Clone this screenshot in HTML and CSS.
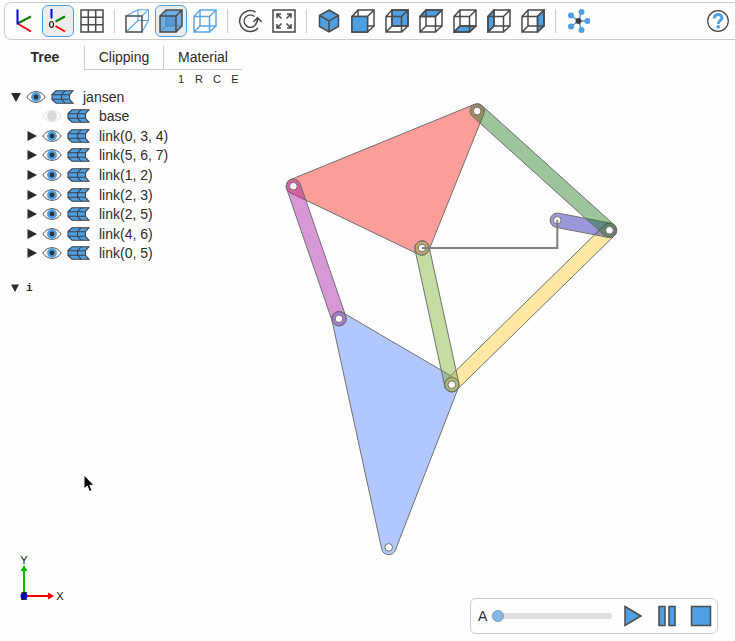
FILE: index.html
```html
<!DOCTYPE html>
<html lang="en">
<head>
<meta charset="utf-8">
<title>jansen</title>
<link rel="stylesheet" href="styles.css">
</head>
<body>
<svg class="defs" aria-hidden="true">
  <symbol id="box" viewBox="0 0 24 24"><path d="M1 7.500H16.500V23H1zM7 1H23V17H7zM1 7.500L7 1M16.500 7.500L23 1M16.500 23L23 17M1 23L7 17"/></symbol>
  <symbol id="eye" viewBox="0 0 20 14"><path d="M.8 7C5.500-.2 14.500-.2 19.200 7C14.500 14.200 5.500 14.200.8 7z" fill="#fff" stroke="#555" stroke-width="1"/><circle cx="10" cy="7" r="4.900" fill="#4f9fe3"/><circle cx="10" cy="7" r="2.400" fill="#333"/></symbol>
  <symbol id="eye-off" viewBox="0 0 20 14"><path d="M.8 7C5.500-.2 14.500-.2 19.200 7C14.500 14.200 5.500 14.200.8 7z" fill="#fff" stroke="#ddd" stroke-width="1"/><circle cx="10" cy="7" r="4.900" fill="#d9d9d9"/></symbol>
  <symbol id="shape" viewBox="0 0 23 14"><path d="M5 .8H22L18.500 4.700V9.300L22 13.200H5L1 9.500V4.500z" fill="#4f9fe3" stroke="#3b4046" stroke-width="1.100"/><path d="M1 4.700H18.500M1 9.300H18.500M14 .8L10.500 4.700V9.300L14 13.200" fill="none" stroke="#3b4046" stroke-width="1.100"/></symbol>
  <symbol id="closed" viewBox="0 0 10 12"><path d="M.5 1L10 6L.5 11z" fill="#2b2b2b"/></symbol>
  <symbol id="open" viewBox="0 0 10 12"><path d="M0 2H10L5 11z" fill="#2b2b2b"/></symbol>
</svg>

<header class="toolbar">
  <button class="tool" aria-label="Axes"><svg viewBox="0 0 24 24"><g fill="none" stroke-width="2"><path stroke="#007f00" d="M5.500 14.500L19 7.500"/><path stroke="red" d="M5.500 14.500L19 22.500"/><path stroke="#0000e8" d="M5.500.5V15.500"/></g></svg></button>
  <button class="tool on" aria-label="Axes at origin"><svg viewBox="0 0 24 24"><g fill="none" stroke-width="2"><path stroke="#007f00" d="M9.500 12.500L19 7.500"/><path stroke="red" d="M9.500 17L19 22.500"/><path stroke="#0000e8" d="M5.500 0V9.500"/></g><ellipse cx="5.500" cy="15.500" rx="2" ry="3" fill="none" stroke="#222" stroke-width="1.200"/></svg></button>
  <button class="tool" aria-label="Grid"><svg class="line" viewBox="0 0 24 24"><path d="M1 1H23V23H1zM8.300 1V23M15.700 1V23M1 8.300H23M1 15.700H23"/></svg></button>
  <span class="sep"></span>
  <button class="tool" aria-label="Perspective"><svg class="line" viewBox="0 0 24 24"><path class="thin" d="M13 .7H23.500V11.500H13zM1 7L13 .7M17 7L23.500.7M17 23L23.500 11.500M1 23L13 11.500"/><path d="M1 7H17V23H1z"/></svg></button>
  <button class="tool on" aria-label="Transparent"><svg class="line" viewBox="0 0 24 24"><path fill="#72ade0" stroke="none" d="M1 7L7 1H23V17L17 23H1z"/><path fill="#5799d3" stroke="none" d="M7 7H17V17H7z"/><path stroke="#4a86ba" stroke-width="1" d="M7 1V17H23M1 23L7 17"/><path d="M1 7H17V23H1zM1 7L7 1H23V17L17 23M17 7L23 1"/></svg></button>
  <button class="tool" aria-label="Black edges"><svg class="line sky" viewBox="0 0 24 24"><use href="#box"/></svg></button>
  <span class="sep"></span>
  <button class="tool" aria-label="Reset view"><svg class="line" viewBox="0 0 24 24"><path d="M17.500 3A10.500 10.500 0 1 0 20 19M16.500 7.500A6.200 6.200 0 1 0 15.500 17.500C18.500 15.500 19.500 12.500 19.500 9.500M15.500 13L19.500 8.500L23.700 13"/></svg></button>
  <button class="tool" aria-label="Fit"><svg class="line" viewBox="0 0 24 24"><path d="M1 1H23V23H1z"/><path d="M5 9V5H9M5 5L9.500 9.500M15 5H19V9M19 5L14.500 9.500M5 15V19H9M5 19L9.500 14.500M19 15V19H15M19 19L14.500 14.500"/></svg></button>
  <span class="sep"></span>
  <button class="tool" aria-label="Isometric"><svg class="line" viewBox="0 0 24 24"><path fill="#4f9fe3" d="M12 1L21.500 6.500V17.500L12 23L2.500 17.500V6.500z"/><path d="M2.500 6.500L12 12L21.500 6.500M12 12V23"/></svg></button>
  <button class="tool" aria-label="Front"><svg class="line" viewBox="0 0 24 24"><use href="#box"/><path fill="#4f9fe3" d="M1 7.500H16.500V23H1z"/></svg></button>
  <button class="tool" aria-label="Back"><svg class="line" viewBox="0 0 24 24"><path fill="#4f9fe3" d="M7 1H23V17H7z"/><use href="#box"/></svg></button>
  <button class="tool" aria-label="Top"><svg class="line" viewBox="0 0 24 24"><path fill="#4f9fe3" d="M1 7.500L7 1H23L16.500 7.500z"/><use href="#box"/></svg></button>
  <button class="tool" aria-label="Bottom"><svg class="line" viewBox="0 0 24 24"><path fill="#4f9fe3" d="M1 23L7 17H23L16.500 23z"/><use href="#box"/></svg></button>
  <button class="tool" aria-label="Left"><svg class="line" viewBox="0 0 24 24"><path fill="#4f9fe3" d="M1 7.500L7 1V17L1 23z"/><use href="#box"/></svg></button>
  <button class="tool" aria-label="Right"><svg class="line" viewBox="0 0 24 24"><path fill="#4f9fe3" d="M16.500 7.500L23 1V17L16.500 23z"/><use href="#box"/></svg></button>
  <span class="sep"></span>
  <button class="tool" aria-label="Explode"><svg viewBox="0 0 24 24"><path d="M12.500 12L5 6.500M12.500 12L15.500 3M12.500 12H22M12.500 12L15.500 21M12.500 12L5 17.500" stroke="#4f8fca" stroke-width="1.300"/><g fill="#4f9fe3"><circle cx="5" cy="6.500" r="3"/><circle cx="15.500" cy="3" r="3"/><circle cx="21.500" cy="12" r="3"/><circle cx="15.500" cy="21" r="3"/><circle cx="5" cy="17.500" r="3"/></g><circle cx="12.500" cy="12" r="3" fill="#3b4046"/></svg></button>
  <button class="tool help" aria-label="Help"><svg viewBox="0 0 24 24"><circle cx="12" cy="12" r="10.300" fill="#fff" stroke="#444" stroke-width="1.200"/><path d="M8.200 9.500C8.200 4 16 4.300 16 9C16 11.500 12.200 11.500 12.200 15" fill="none" stroke="#4f9fe3" stroke-width="3"/><circle cx="12.200" cy="17.900" r="1.800" fill="#4f9fe3"/></svg></button>
</header>

<main class="main">
  <section class="side">
    <nav class="tabs">
      <button class="tab active">Tree</button>
      <button class="tab">Clipping</button>
      <button class="tab">Material</button>
    </nav>
    <div class="collapse"><button>1</button><button>R</button><button>C</button><button>E</button></div>
    <ul class="tree">
      <li><svg class="caret"><use href="#open"/></svg><svg class="eye"><use href="#eye"/></svg><svg class="shape"><use href="#shape"/></svg><span>jansen</span></li>
      <li class="child"><span class="caret"></span><svg class="eye"><use href="#eye-off"/></svg><svg class="shape"><use href="#shape"/></svg><span>base</span></li>
      <li class="child"><svg class="caret"><use href="#closed"/></svg><svg class="eye"><use href="#eye"/></svg><svg class="shape"><use href="#shape"/></svg><span>link(0, 3, 4)</span></li>
      <li class="child"><svg class="caret"><use href="#closed"/></svg><svg class="eye"><use href="#eye"/></svg><svg class="shape"><use href="#shape"/></svg><span>link(5, 6, 7)</span></li>
      <li class="child"><svg class="caret"><use href="#closed"/></svg><svg class="eye"><use href="#eye"/></svg><svg class="shape"><use href="#shape"/></svg><span>link(1, 2)</span></li>
      <li class="child"><svg class="caret"><use href="#closed"/></svg><svg class="eye"><use href="#eye"/></svg><svg class="shape"><use href="#shape"/></svg><span>link(2, 3)</span></li>
      <li class="child"><svg class="caret"><use href="#closed"/></svg><svg class="eye"><use href="#eye"/></svg><svg class="shape"><use href="#shape"/></svg><span>link(2, 5)</span></li>
      <li class="child"><svg class="caret"><use href="#closed"/></svg><svg class="eye"><use href="#eye"/></svg><svg class="shape"><use href="#shape"/></svg><span>link(4, 6)</span></li>
      <li class="child"><svg class="caret"><use href="#closed"/></svg><svg class="eye"><use href="#eye"/></svg><svg class="shape"><use href="#shape"/></svg><span>link(0, 5)</span></li>
    </ul>
    <button class="info"><svg viewBox="0 0 8 8"><path d="M0 .5H8L4 8z" fill="#2b2b2b"/></svg>i</button>
  </section>

  <svg class="canvas" id="canvas" viewBox="242 40 493 601" role="img" aria-label="Jansen linkage"></svg>

  <svg class="gizmo" viewBox="0 0 70 60">
    <path d="M24 44V18" stroke="#00c000" stroke-width="2"/><path d="M20.500 19L24 13L27.500 19z" fill="#00c000"/>
    <path d="M24 44H49" stroke="red" stroke-width="2"/><path d="M48 40.500L54 44L48 47.500z" fill="red"/>
    <circle cx="24" cy="44" r="3.500" fill="#00f"/>
    <text x="24" y="12">Y</text><text x="60" y="48">X</text><text x="24" y="48">Z</text>
  </svg>

  <svg class="pointer" viewBox="0 0 12 19"><path d="M1 1V15L4.200 12L6.500 17.500L9 16.500L6.800 11.300H11z" fill="#000" stroke="#fff"/></svg>

  <div class="player">
    <label for="time">A</label>
    <input id="time" type="range" min="0" max="100" value="0">
    <button class="tool" aria-label="Play"><svg class="line" viewBox="0 0 24 24"><path fill="#4f9fe3" d="M4 2.500L20 12L4 21.500z"/></svg></button>
    <button class="tool" aria-label="Pause"><svg class="line" viewBox="0 0 24 24"><path fill="#4f9fe3" d="M4 2.500H10V21.500H4zM14 2.500H20V21.500H14z"/></svg></button>
    <button class="tool" aria-label="Stop"><svg class="line" viewBox="0 0 24 24"><path fill="#4f9fe3" d="M2.500 2.500H21.500V21.500H2.500z"/></svg></button>
  </div>
</main>
<script src="linkage.js"></script>
</body>
</html>
```
FILE: styles.css
```css
* { box-sizing: border-box; }
body {
  margin: 0;
  min-height: 100vh;
  display: flex;
  flex-direction: column;
  overflow: hidden;
  background: #fefefe;
  color: #2b2b2b;
  font: 14px "Liberation Sans", Arial, sans-serif;
}
button {
  margin: 0;
  padding: 0;
  border: 0;
  background: none;
  color: inherit;
  font: inherit;
}
.defs { position: absolute; width: 0; height: 0; }

.toolbar {
  display: flex;
  align-items: center;
  margin: 2px 0 0 4px;
  padding: 2px 0 2px 2px;
  border: 1px solid #ccc;
  border-right: 0;
  border-radius: 7px 0 0 7px;
}
.tool {
  flex: none;
  display: grid;
  place-items: center;
  width: 32px;
  height: 32px;
  margin: 0 1px;
  border: 1px solid transparent;
  border-radius: 6px;
}
.tool svg { width: 24px; height: 24px; }
.tool.on { background: #ececec; border-color: #4f9fe3; }
.line { fill: none; stroke: #4a4a4a; stroke-width: 1.5; }
.line .thin { stroke: #5aa5e6; stroke-width: 1.1; }
.sky { stroke: #5aa5e6; }
.sep { flex: none; width: 1px; height: 24px; margin: 0 5px; background: #ccc; }
.help { margin-left: auto; }

.main {
  position: relative;
  flex: 1;
  display: grid;
  grid-template-columns: 242px 1fr;
}
.canvas { display: block; width: 100%; height: 100%; }
.canvas .link { stroke: #707070; stroke-width: 1; fill-opacity: 0.42; }
.canvas .ring { fill: none; stroke: #707070; stroke-width: 1; }
.canvas .hole { fill: #fff; stroke: #707070; stroke-width: 1; }
.canvas .ground { fill: none; stroke: #808080; stroke-width: 2; }

.side { padding-top: 6px; }
.tabs { display: flex; margin-left: 5px; }
.tab {
  flex: 1;
  height: 24px;
  padding-bottom: 2px;
  border-bottom: 1px solid #ccc;
  border-left: 1px solid #ccc;
}
.tab.active { border-color: transparent; font-weight: bold; }
.collapse {
  display: flex;
  justify-content: flex-end;
  height: 17px;
  margin-right: -2px;
  font-size: 11px;
}
.collapse button { width: 18px; }
.tree {
  display: grid;
  grid-auto-rows: 1fr;
  height: 176px;
  margin: 0;
  padding: 0 0 0 11px;
  list-style: none;
}
.tree li { display: flex; align-items: center; gap: 5px; }
.tree .child { padding-left: 16px; }
.caret { width: 10px; height: 12px; }
.eye { width: 20px; height: 14px; }
.shape { width: 23px; height: 14px; }
.tree li span:last-child { margin-left: 4px; }
.info {
  display: flex;
  align-items: center;
  gap: 7px;
  margin: 19px 0 0 11px;
  font: bold 11px "Liberation Mono", monospace;
}
.info svg { width: 8px; height: 8px; }

.gizmo { position: absolute; left: 0; bottom: 29px; width: 70px; height: 60px; }
.gizmo text { font-size: 11px; text-anchor: middle; fill: #111; }
.pointer { position: absolute; left: 83px; top: 434px; width: 12px; height: 19px; }

.player {
  position: absolute;
  right: 17px;
  bottom: 7px;
  display: flex;
  align-items: center;
  width: 248px;
  height: 36px;
  padding: 0 0 0 7px;
  border: 1px solid #ccc;
  border-radius: 6px;
  background: #fefefe;
}
.player input {
  appearance: none;
  flex: none;
  width: 120px;
  height: 6px;
  margin: 0 4px 0 5px;
  border-radius: 3px;
  background: #e0e0e0;
}
.player input::-webkit-slider-thumb {
  appearance: none;
  width: 12px;
  height: 12px;
  border: 1px solid #7a9dc0;
  border-radius: 50%;
  background: #85b9ea;
}
```
FILE: linkage.js
```js
// Draws each link as the rounded outline around its joints (clockwise order).
const R = 7.2;
const P = {
  a: [477.2, 111], b: [293.4, 186.2], c: [422, 248], d: [557.3, 220.3],
  e: [609.5, 230.3], f: [451.8, 384.7], g: [339, 318.7], h: [388.7, 547.4]
};
const links = [
  ["bac", "rgb(255,26,19)"],
  ["gfh", "rgb(74,124,255)"],
  ["ef", "rgb(255,202,40)"],
  ["cf", "rgb(119,174,38)"],
  ["bg", "rgb(160,14,160)"],
  ["de", "rgb(17,12,171)"],
  ["ea", "rgb(24,117,19)"]
];
const canvas = document.getElementById("canvas");

function add(tag, attrs) {
  const el = document.createElementNS("http://www.w3.org/2000/svg", tag);
  for (const k in attrs) el.setAttribute(k, attrs[k]);
  canvas.append(el);
}

function outline(names) {
  const pts = [...names].map(n => P[n]);
  let d = "";
  pts.forEach((p, i) => {
    const q = pts[(i + 1) % pts.length];
    const len = Math.hypot(q[0] - p[0], q[1] - p[1]);
    const nx = (q[1] - p[1]) / len * R;
    const ny = -(q[0] - p[0]) / len * R;
    d += i ? `A${R} ${R} 0 0 1 ${p[0] + nx} ${p[1] + ny}` : `M${p[0] + nx} ${p[1] + ny}`;
    d += `L${q[0] + nx} ${q[1] + ny}`;
  });
  const start = d.slice(1, d.indexOf("L"));
  return `${d}A${R} ${R} 0 0 1 ${start}Z`;
}

for (const [names, fill] of links) add("path", { class: "link", d: outline(names), fill });
for (const n of "cfg") add("circle", { class: "ring", cx: P[n][0], cy: P[n][1], r: R });
for (const n in P) add("circle", { class: "hole", cx: P[n][0], cy: P[n][1], r: 3.8 });
add("path", { class: "ground", d: "M422 248H557.3V220" });
```
